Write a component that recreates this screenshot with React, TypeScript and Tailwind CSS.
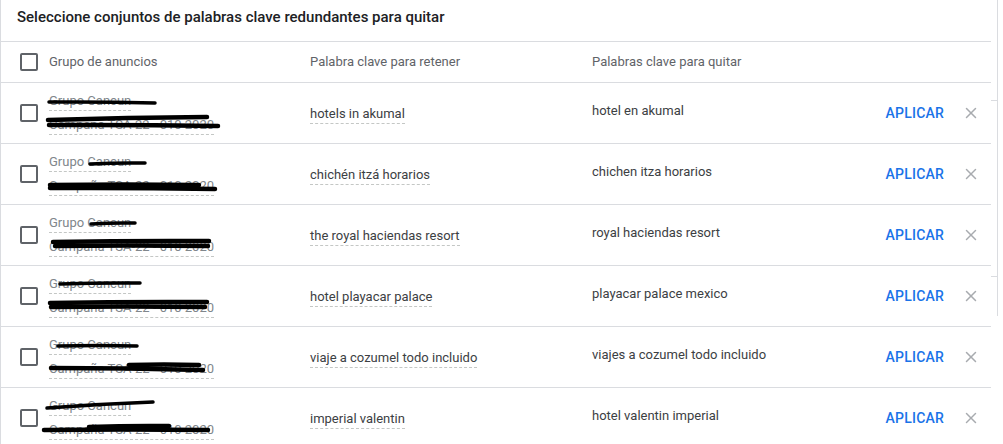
import { X } from 'lucide-react';

type Stroke = [number, number, number, number];

interface Row {
  group: string;
  campaign: string;
  keep: string;
  remove: string;
  // redaction strokes, coordinates relative to the ad group cell (x) and row top (y)
  strokes: Stroke[];
}

const ROWS: Row[] = [
  {
    group: 'Grupo Cancun',
    campaign: 'Campaña TSA-22 - 010 2020',
    keep: 'hotels in akumal',
    remove: 'hotel en akumal',
    strokes: [[0, 19, 106, 20], [-1, 37, 158, 34], [0, 42, 169, 43]],
  },
  {
    group: 'Grupo Cancun',
    campaign: 'Campaña TSA-22 - 010 2020',
    keep: 'chichén itzá horarios',
    remove: 'chichen itza horarios',
    strokes: [[41, 20, 96, 19], [1, 41, 150, 41], [1, 44, 166, 45]],
  },
  {
    group: 'Grupo Cancun',
    campaign: 'Campaña TSA-22 - 010 2020',
    keep: 'the royal haciendas resort',
    remove: 'royal haciendas resort',
    strokes: [[42, 19, 86, 18], [4, 37, 160, 36], [6, 41, 159, 41]],
  },
  {
    group: 'Grupo Cancun',
    campaign: 'Campaña TSA-22 - 010 2020',
    keep: 'hotel playacar palace',
    remove: 'playacar palace mexico',
    strokes: [[11, 18, 91, 17], [1, 37, 158, 36], [2, 41, 156, 41]],
  },
  {
    group: 'Grupo Cancun',
    campaign: 'Campaña TSA-22 - 010 2020',
    keep: 'viaje a cozumel todo incluido',
    remove: 'viajes a cozumel todo incluido',
    strokes: [[9, 19, 88, 19], [2, 41, 154, 43], [80, 38, 150, 38]],
  },
  {
    group: 'Grupo Cancun',
    campaign: 'Campaña TSA-22 - 010 2020',
    keep: 'imperial valentin',
    remove: 'hotel valentin imperial',
    strokes: [[-2, 20, 104, 14], [-5, 42, 159, 42], [40, 39, 120, 38]],
  },
];

function Checkbox() {
  return <div className="w-[18px] h-[18px] shrink-0 rounded-[2px] border-2 border-[#5f6368] bg-white" />;
}

function Dashed({ children }: { children: React.ReactNode }) {
  return (
    <span className="inline-block leading-[17px] pb-[1px] border-b border-dashed border-[#c4c7c5]">
      {children}
    </span>
  );
}

export default function App() {
  return (
    <div
      className="w-[1003px] h-[444px] bg-white flex overflow-hidden"
      style={{ fontFamily: 'Roboto, "Liberation Sans", Arial, sans-serif' }}
    >
      {/* main table */}
      <div className="w-[991px] shrink-0 border-l border-[#dadce0] flex flex-col">
        <div className="h-[42px] shrink-0 border-b border-[#dadce0] pl-[16px] pt-[7px]">
          <h2 className="text-[15px] font-medium text-[#202124] leading-[20px]">
            Seleccione conjuntos de palabras clave redundantes para quitar
          </h2>
        </div>

        {/* header */}
        <div className="h-[41px] shrink-0 border-b border-[#dadce0] flex items-center pl-[19px] text-[13px] text-[#5f6368]">
          <Checkbox />
          <div className="w-[261px] shrink-0 ml-[11px]">Grupo de anuncios</div>
          <div className="w-[282px] shrink-0">Palabra clave para retener</div>
          <div className="flex-1">Palabras clave para quitar</div>
        </div>

        {ROWS.map((r, i) => (
          <div
            key={i}
            className="h-[61px] shrink-0 border-b border-[#dadce0] flex items-center pl-[19px] text-[13px] text-[#3c4043]"
          >
            <Checkbox />
            <div className="relative w-[261px] shrink-0 ml-[11px] self-stretch flex flex-col justify-center gap-[4px] text-[#80868b]">
              <div>
                <Dashed>{r.group}</Dashed>
              </div>
              <div>
                <Dashed>{r.campaign}</Dashed>
              </div>
              <svg className="absolute left-0 top-0 overflow-visible" width="200" height="61">
                {r.strokes.map(([x1, y1, x2, y2], j) => (
                  <path
                    key={j}
                    d={`M${x1} ${y1} Q${(x1 + x2) / 2} ${(y1 + y2) / 2 - 1} ${x2} ${y2}`}
                    stroke="#000"
                    strokeWidth={j === 0 ? 3.5 : 4.5}
                    strokeLinecap="round"
                    fill="none"
                  />
                ))}
              </svg>
            </div>
            <div className="w-[282px] shrink-0 pt-[1px]">
              <Dashed>{r.keep}</Dashed>
            </div>
            <div className="flex-1 pb-[4px]">{r.remove}</div>
            <button className="text-[14px] font-medium text-[#1a73e8] tracking-[0.2px] mr-[18px]">APLICAR</button>
            <X className="w-[18px] h-[18px] text-[#a8abaf] mr-[11px]" strokeWidth={2} />
          </div>
        ))}
      </div>

      {/* scrollbar track */}
      <div className="w-[7px] shrink-0 flex flex-col">
        <div className="h-[100px] border-r border-[#dadce0]" />
        <div className="h-[177px] border-r border-t border-b border-[#dadce0]" />
        <div className="h-[39px] border-r border-[#dadce0]" />
      </div>
    </div>
  );
}
